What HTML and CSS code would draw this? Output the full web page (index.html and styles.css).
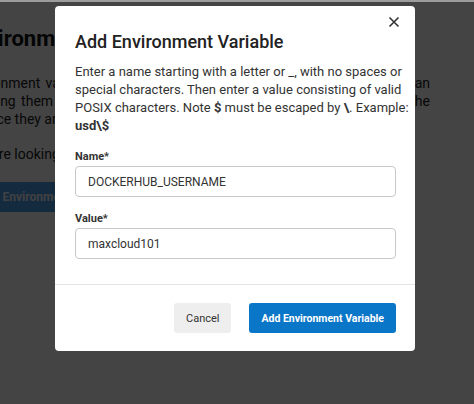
FILE: index.html
```html
<!DOCTYPE html>
<html lang="en">
<head>
<meta charset="utf-8">
<title>Add Environment Variable</title>
<link rel="stylesheet" href="styles.css">
</head>
<body>
<div class="topline"></div>
<main class="page">
  <h1 class="page-title">Environment Variables</h1>
  <div class="page-text">
    <p class="line justify">Environment variables let you store secret values for your builds and can</p>
    <p class="line justify">by using them in the pipeline configuration file instead of hardcoding the</p>
    <p class="line">so once they are saved in the settings of this project page.</p>
    <p class="line gap">If you're looking to add variables to a specific branch only, use the filter.</p>
  </div>
  <button class="page-btn">Add Environment Variable</button>
</main>
<div class="overlay"></div>
<section class="modal" role="dialog" aria-labelledby="modal-title">
  <button class="close" aria-label="Close">
    <svg width="12" height="12" viewBox="0 0 12 12"><path d="M1.5 1.5L10.5 10.5M10.5 1.5L1.5 10.5" stroke="#333" stroke-width="1.6" fill="none"/></svg>
  </button>
  <div class="modal-body">
    <h2 id="modal-title" class="modal-title">Add Environment Variable</h2>
    <p class="desc">Enter a name starting with a letter or _, with no spaces or<br>special characters. Then enter a value consisting of valid<br>POSIX characters. Note <b>$</b> must be escaped by <b>\</b>. Example:<br><b>usd\$</b></p>
    <label class="field">
      <span class="label">Name*</span>
      <input class="input" type="text" value="DOCKERHUB_USERNAME">
    </label>
    <label class="field">
      <span class="label">Value*</span>
      <input class="input" type="text" value="maxcloud101">
    </label>
  </div>
  <div class="modal-footer">
    <button class="btn btn-secondary">Cancel</button>
    <button class="btn btn-primary">Add Environment Variable</button>
  </div>
</section>
</body>
</html>
```
FILE: styles.css
```css
* { box-sizing: border-box; }
html, body { margin: 0; padding: 0; }
body {
  width: 474px;
  height: 404px;
  overflow: hidden;
  background: #fff;
  font-family: Roboto, "Liberation Sans", sans-serif;
  color: #222;
  position: relative;
}
.topline {
  position: relative;
  z-index: 1;
  height: 2px;
  background: #9c9c9c;
}
.page {
  margin-left: -38px;
  padding-top: 22px;
}
.page-title {
  margin: 0;
  font-size: 22px;
  font-weight: 700;
  line-height: 30px;
  color: #111;
}
.page-text { margin-top: 20px; }
.line {
  margin: 0;
  white-space: nowrap;
  font-size: 14px;
  line-height: 18px;
  color: #222;
}
.line.justify {
  width: 468px;
  white-space: normal;
  text-align: justify;
  text-align-last: justify;
}
.line.gap { margin-top: 17px; }
.page-btn {
  margin-top: 19px;
  height: 30px;
  padding: 0 16px;
  border: 0;
  border-radius: 3px;
  background: #4b9de8;
  color: #f0f4f8;
  font-family: inherit;
  font-size: 12px;
  font-weight: 700;
}
.overlay {
  position: absolute;
  inset: 0;
  background: rgba(0, 0, 0, 0.733);
}
.modal {
  position: absolute;
  left: 55px;
  top: 6px;
  width: 360px;
  background: #fff;
  border-radius: 4px;
  display: flex;
  flex-direction: column;
}
.close {
  position: absolute;
  right: 12px;
  top: 7px;
  width: 18px;
  height: 18px;
  padding: 0;
  border: 0;
  background: transparent;
  display: flex;
  align-items: center;
  justify-content: center;
}
.modal-body {
  padding: 25px 19px 25px 20px;
}
.modal-title {
  margin: 0;
  font-size: 18px;
  font-weight: 500;
  line-height: 22px;
  color: #222;
}
.desc {
  margin: 10px 0 0;
  font-size: 13px;
  line-height: 18px;
  color: #333;
  white-space: nowrap;
}
.desc b { font-weight: 700; }
.field {
  display: flex;
  flex-direction: column;
  margin-top: 14px;
}
.label {
  font-size: 11px;
  font-weight: 700;
  line-height: 16px;
  color: #333;
  margin-bottom: 1px;
}
.input {
  height: 31px;
  width: 100%;
  border: 1px solid #c9c9c9;
  border-radius: 4px;
  padding: 0 12px;
  font-family: inherit;
  font-size: 12px;
  color: #333;
  background: #fff;
}
.modal-footer {
  border-top: 1px solid #e3e3e3;
  padding: 18px 19px 18px 20px;
  display: flex;
  justify-content: flex-end;
  gap: 18px;
}
.btn {
  height: 30px;
  border: 0;
  border-radius: 3px;
  font-family: inherit;
  padding: 0 12px;
}
.btn-secondary {
  background: #eeeeee;
  color: #333;
  font-size: 11px;
}
.btn-primary {
  background: #0a76c8;
  color: #fff;
  font-weight: 700;
  font-size: 10.5px;
}
```
